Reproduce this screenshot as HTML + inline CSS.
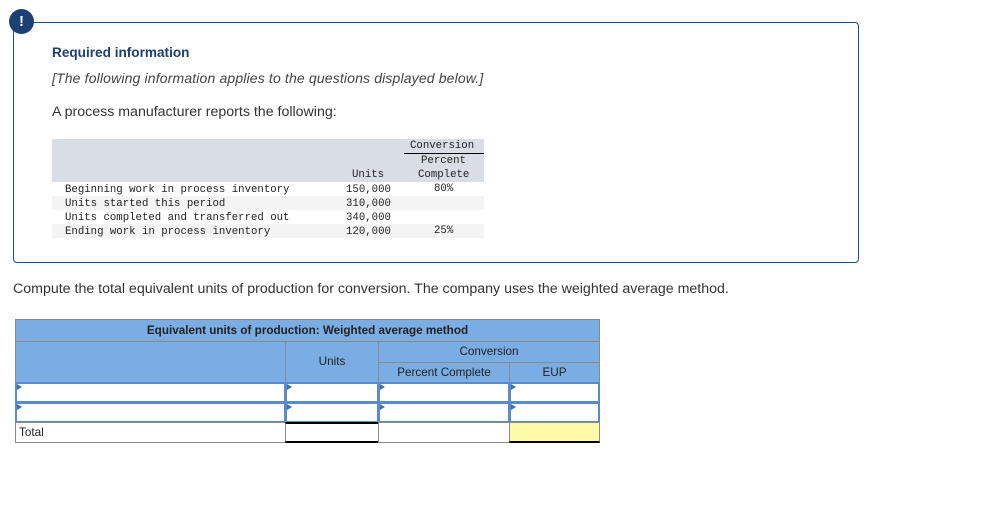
<!DOCTYPE html>
<html><head><style>
*{margin:0;padding:0;box-sizing:border-box}
body{width:1007px;height:510px;background:#fff;position:relative;font-family:"Liberation Sans",sans-serif;color:#333;overflow:hidden}
.a{position:absolute}
.box{left:13px;top:22px;width:846px;height:241px;border:1px solid #1f4e87;border-radius:4px}
.ic{left:9px;top:9px;width:25px;height:25px;border-radius:50%;background:#1d3f72;color:#fff;font-weight:bold;font-size:15px;text-align:center;line-height:25px}
.m{font-family:"Liberation Mono",monospace;font-size:10.7px;color:#222;white-space:pre}
.c{position:absolute;border:1px solid #8a8a8a;font-size:11.7px;color:#222;text-align:center}
.bl{background:#7aade3}
.in{background:#fff;border:2px solid #5b8bc7}
.in:before{content:"";position:absolute;left:0;top:0;border-left:5px solid #3a70c0;border-top:3px solid transparent;border-bottom:3px solid transparent}
</style></head><body>
<div class="a box"></div>
<div class="a ic">!</div>
<div class="a" style="left:52px;top:45px;font-size:13.6px;font-weight:bold;color:#1d3f72">Required information</div>
<div class="a" style="left:52px;top:70px;font-size:14px;letter-spacing:0.15px;font-style:italic;color:#444">[The following information applies to the questions displayed below.]</div>
<div class="a" style="left:52px;top:104px;font-size:14.2px;color:#333">A process manufacturer reports the following:</div>
<div class="a" style="left:52px;top:139px;width:432px;height:43px;background:#d9dde6"></div>
<div class="a" style="left:52px;top:196px;width:432px;height:14px;background:#f4f4f4"></div>
<div class="a" style="left:52px;top:224px;width:432px;height:14px;background:#f4f4f4"></div>
<div class="a" style="left:404px;top:153px;width:80px;height:1px;background:#000"></div>
<div class="a m" style="left:410px;top:140px">Conversion</div>
<div class="a m" style="left:421px;top:155px">Percent</div>
<div class="a m" style="left:418px;top:169px">Complete</div>
<div class="a m" style="left:352px;top:169px">Units</div>
<div class="a m" style="left:65px;top:183px;line-height:14px">Beginning work in process inventory
Units started this period
Units completed and transferred out
Ending work in process inventory</div>
<div class="a m" style="left:346px;top:183px;line-height:14px">150,000
310,000
340,000
120,000</div>
<div class="a m" style="left:434px;top:183px">80%</div>
<div class="a m" style="left:434px;top:225px">25%</div>
<div class="a" style="left:13px;top:281px;font-size:14.2px;color:#333">Compute the total equivalent units of production for conversion. The company uses the weighted average method.</div>

<div class="c bl" style="left:15px;top:319px;width:585px;height:23px;line-height:21px;font-weight:bold">Equivalent units of production: Weighted average method</div>
<div class="c bl" style="left:15px;top:341px;width:271px;height:42px"></div>
<div class="c bl" style="left:285px;top:341px;width:94px;height:42px;line-height:40px">Units</div>
<div class="c bl" style="left:378px;top:341px;width:222px;height:22px;line-height:20px;border-bottom:1px solid #000">Conversion</div>
<div class="c bl" style="left:378px;top:362px;width:132px;height:21px;line-height:19px">Percent Complete</div>
<div class="c bl" style="left:509px;top:362px;width:91px;height:21px;line-height:19px">EUP</div>

<div class="c in" style="left:15px;top:382px;width:271px;height:21px"></div>
<div class="c in" style="left:285px;top:382px;width:94px;height:21px"></div>
<div class="c in" style="left:378px;top:382px;width:132px;height:21px"></div>
<div class="c in" style="left:509px;top:382px;width:91px;height:21px"></div>
<div class="c in" style="left:15px;top:402px;width:271px;height:21px"></div>
<div class="c in" style="left:285px;top:402px;width:94px;height:21px"></div>
<div class="c in" style="left:378px;top:402px;width:132px;height:21px"></div>
<div class="c in" style="left:509px;top:402px;width:91px;height:21px"></div>

<div class="c" style="left:15px;top:422px;width:271px;height:21px;text-align:left;padding-left:3px;line-height:19px">Total</div>
<div class="c" style="left:285px;top:422px;width:94px;height:21px;border-top:2px solid #000;border-bottom:2px solid #000"></div>
<div class="c" style="left:378px;top:422px;width:132px;height:21px"></div>
<div class="c" style="left:509px;top:422px;width:91px;height:21px;background:#fffaa8;border-bottom:2px solid #000"></div>
</body></html>
